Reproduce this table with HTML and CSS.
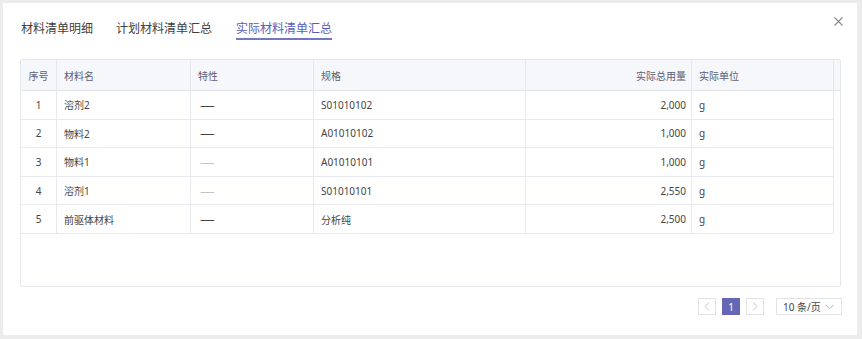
FILE: index.html
```html
<!DOCTYPE html>
<html lang="zh-CN">
<head>
<meta charset="utf-8">
<title>实际材料清单汇总</title>
<link rel="stylesheet" href="styles.css">
</head>
<body>
<div class="modal">
  <div class="tabs">
    <span class="tab">材料清单明细</span>
    <span class="tab">计划材料清单汇总</span>
    <span class="tab active">实际材料清单汇总</span>
  </div>
  <svg class="close" width="9" height="9" viewBox="0 0 9 9"><path d="M0.5 0.5L8.5 8.5M8.5 0.5L0.5 8.5" stroke="#8a8a8a" stroke-width="1.1" fill="none"/></svg>

  <div class="table-box">
    <div class="row head">
      <div class="cell center">序号</div>
      <div class="cell">材料名</div>
      <div class="cell">特性</div>
      <div class="cell">规格</div>
      <div class="cell right">实际总用量</div>
      <div class="cell">实际单位</div>
      <div class="gutter"></div>
    </div>
    <div class="row">
      <div class="cell center">1</div>
      <div class="cell">溶剂2</div>
      <div class="cell"><span class="dash">—</span></div>
      <div class="cell">S01010102</div>
      <div class="cell right">2,000</div>
      <div class="cell">g</div>
      <div class="gutter"></div>
    </div>
    <div class="row">
      <div class="cell center">2</div>
      <div class="cell">物料2</div>
      <div class="cell"><span class="dash">—</span></div>
      <div class="cell">A01010102</div>
      <div class="cell right">1,000</div>
      <div class="cell">g</div>
      <div class="gutter"></div>
    </div>
    <div class="row">
      <div class="cell center">3</div>
      <div class="cell">物料1</div>
      <div class="cell"><span class="dash light">—</span></div>
      <div class="cell">A01010101</div>
      <div class="cell right">1,000</div>
      <div class="cell">g</div>
      <div class="gutter"></div>
    </div>
    <div class="row">
      <div class="cell center">4</div>
      <div class="cell">溶剂1</div>
      <div class="cell"><span class="dash light">—</span></div>
      <div class="cell">S01010101</div>
      <div class="cell right">2,550</div>
      <div class="cell">g</div>
      <div class="gutter"></div>
    </div>
    <div class="row">
      <div class="cell center">5</div>
      <div class="cell">前驱体材料</div>
      <div class="cell"><span class="dash">—</span></div>
      <div class="cell">分析纯</div>
      <div class="cell right">2,500</div>
      <div class="cell">g</div>
      <div class="gutter"></div>
    </div>
  </div>

  <div class="pager">
    <span class="pbtn"><svg width="6" height="9" viewBox="0 0 6 9"><path d="M5 0.5L1 4.5L5 8.5" stroke="#c4c4c8" stroke-width="1" fill="none"/></svg></span>
    <span class="pbtn current">1</span>
    <span class="pbtn"><svg width="6" height="9" viewBox="0 0 6 9"><path d="M1 0.5L5 4.5L1 8.5" stroke="#c4c4c8" stroke-width="1" fill="none"/></svg></span>
    <span class="size">10 条/页<svg width="9" height="6" viewBox="0 0 9 6"><path d="M0.5 0.8L4.5 4.8L8.5 0.8" stroke="#b5b5b8" stroke-width="1" fill="none"/></svg></span>
  </div>
</div>
</body>
</html>
```
FILE: styles.css
```css
html, body {
  margin: 0;
  padding: 0;
}
body {
  background: #ececec;
  font-family: "Noto Sans", "Noto Sans CJK SC", sans-serif;
  width: 862px;
  height: 339px;
  overflow: hidden;
}
.modal {
  position: relative;
  box-sizing: border-box;
  margin: 3px;
  width: 854px;
  height: 332px;
  background: #fff;
  padding: 17px 16px 0 17px;
}
.tabs {
  display: flex;
  gap: 23px;
  padding-left: 1px;
}
.tab {
  font-size: 12px;
  line-height: 17px;
  color: #404040;
  padding-bottom: 1px;
  border-bottom: 2px solid transparent;
}
.tab:last-child {
  margin-left: 1px;
}
.tab.active {
  color: #5a5db8;
  border-bottom-color: #7275c8;
}
.close {
  position: absolute;
  top: 14px;
  right: 14px;
}
.table-box {
  box-sizing: border-box;
  margin-top: 19px;
  height: 228px;
  border: 1px solid #e6e7ec;
  border-radius: 2px;
}
.row {
  display: grid;
  grid-template-columns: 36px 134px 123px 212px 166px 142px 1fr;
  height: 28.6px;
  box-sizing: border-box;
}
.row.head {
  height: 31px;
  background: #f6f7fb;
}
.cell {
  box-sizing: border-box;
  border-right: 1px solid #e9eaef;
  border-bottom: 1px solid #e9eaef;
  display: flex;
  align-items: center;
  padding-left: 7px;
  font-size: 10px;
  color: #454545;
  white-space: nowrap;
  overflow: hidden;
}
.head .cell {
  color: #5b5e72;
  border-bottom-color: #e3e4ea;
  border-right-color: #e6e7ec;
}
.cell.center {
  justify-content: center;
  padding-left: 0;
}
.cell.right {
  justify-content: flex-end;
  padding-left: 0;
  padding-right: 5px;
}
.dash {
  display: inline-block;
  margin-left: 2px;
  transform: scaleX(1.45);
  transform-origin: left center;
  font-size: 10px;
  color: #444;
}
.dash.light {
  color: #c2c2c2;
}
.gutter {
  box-sizing: border-box;
}
.head .gutter {
  border-bottom: 1px solid #e3e4ea;
}
.pager {
  display: flex;
  justify-content: flex-end;
  align-items: center;
  gap: 6px;
  margin-top: 11px;
  margin-right: -1px;
}
.pbtn {
  box-sizing: border-box;
  width: 18px;
  height: 17px;
  border: 1px solid #e3e3e6;
  display: flex;
  align-items: center;
  justify-content: center;
  font-size: 10px;
  color: #fff;
  background: #fff;
}
.pbtn.current {
  background: #6567b3;
  border-color: #6567b3;
}
.size {
  box-sizing: border-box;
  margin-left: 6px;
  width: 66px;
  height: 17px;
  border: 1px solid #e3e3e6;
  display: flex;
  align-items: center;
  justify-content: space-between;
  padding: 0 7px 0 6px;
  font-size: 10px;
  color: #444;
}
```
